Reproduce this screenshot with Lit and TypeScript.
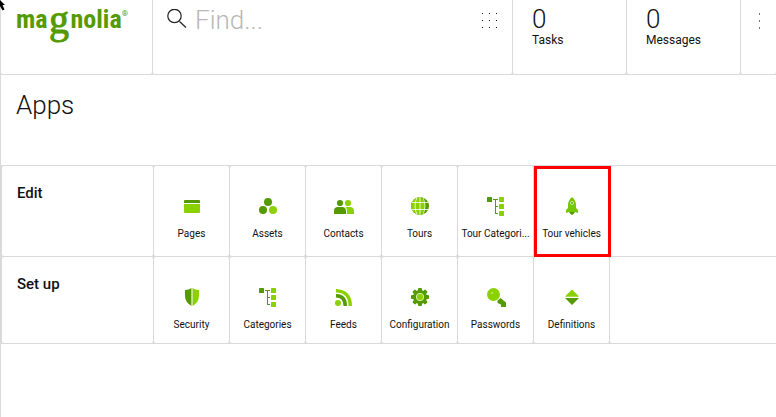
import { LitElement, html, css, svg } from "lit";
import { customElement, property } from "lit/decorators.js";
import { classMap } from "lit/directives/class-map.js";

const categoryTree = svg`
  <rect class="dark" x="1" y="1" width="5" height="5" rx=".5"/>
  <path class="dark" d="M7 3h5v1H7zM9 3h1v15H9zM9 10h3v1H9zM9 17h3v1H9z"/>
  <rect class="lime" x="13" y="1" width="5" height="5" rx=".5"/>
  <rect class="lime" x="13" y="8" width="5" height="5" rx=".5"/>
  <rect class="lime" x="13" y="15" width="5" height="5" rx=".5"/>`;

const icons: Record<string, unknown> = {
  pages: svg`
    <path class="dark" d="M2 5q0-1 1-1h14q1 0 1 1v2H2z"/>
    <path class="lime" d="M2 8h16v8q0 1-1 1H3q-1 0-1-1z"/>`,
  assets: svg`
    <circle class="dark" cx="10" cy="6" r="4"/>
    <circle class="dark" cx="5" cy="14" r="4"/>
    <circle class="lime" cx="15" cy="14" r="4"/>`,
  contacts: svg`
    <circle class="dark" cx="6" cy="7" r="3.100"/>
    <path class="dark" d="M0 18v-3q0-4 4-4h4q4 0 4 4v3z"/>
    <circle class="lime" cx="14" cy="7" r="3.100"/>
    <path class="lime" d="M11.500 11H16q4 0 4 4v3h-7v-3q0-2.500-1.500-4z"/>`,
  globe: svg`
    <circle class="dark" cx="10" cy="10" r="9"/>
    <path class="lime" d="M10 1a9 9 0 0 0 0 18q5-3 5-9t-5-9z"/>
    <path class="cut" d="M10 1v18M2 6.500h16M2 13.500h16M7 1.500q-4 8.500 0 17M13 1.500q4 8.500 0 17"/>`,
  tree: categoryTree,
  rocket: svg`
    <path class="leaf" d="M10 1q4 3.500 4 8v3l2 2v3l-3-1H7l-3 1v-3l2-2V9q0-4.500 4-8z"/>
    <path class="dark" d="M7 16h6l-1.500 2L10 19l-1.500-1z"/>
    <circle class="ring" cx="10" cy="7" r="1.500"/>`,
  shield: svg`
    <path class="dark" d="M9.500 1Q7 3 3 3v6q0 6 6.500 10z"/>
    <path class="lime" d="M10.500 1Q13 3 17 3v6q0 6-6.500 10z"/>
    <path class="pale" d="M9.500 1h1v18h-1z"/>`,
  feed: svg`
    <circle class="lime" cx="4" cy="16" r="3"/>
    <path class="dark" d="M2 7q11 0 11 12H9.500Q9.500 10.500 2 10.500z"/>
    <path class="lime" d="M2 2q16 1 16 17h-3.500Q14.500 5.500 2 5.500z"/>`,
  gear: svg`
    <circle class="dark" cx="10" cy="10" r="7"/>
    ${[0, 45, 90, 135].map((a) => svg`
      <rect class="dark" x="8" y="1" width="4" height="18" rx="1" transform="rotate(${a} 10 10)"/>`)}
    <circle class="lime hub" cx="10" cy="10" r="3.700"/>`,
  key: svg`
    <circle class="lime" cx="7.500" cy="7.500" r="6.500"/>
    <circle class="pale" cx="6" cy="6" r="1"/>
    <path class="dark" d="M14.500 11l5.500 4.500V20h-5v-2.500l-3.500-1.500V13.500z"/>`,
  diamond: svg`
    <path class="lime" d="M10 2.500l6.500 6.500v.800h-13V9z"/>
    <path class="dark" d="M3.500 11h13v.500L10 18l-6.500-6.500z"/>`,
};

interface App { label: string; icon: string; marked?: boolean; }
interface Group { name: string; apps: App[]; }

const groups: Group[] = [
  {
    name: "Edit",
    apps: [
      { label: "Pages", icon: "pages" },
      { label: "Assets", icon: "assets" },
      { label: "Contacts", icon: "contacts" },
      { label: "Tours", icon: "globe" },
      { label: "Tour Categori...", icon: "tree" },
      { label: "Tour vehicles", icon: "rocket", marked: true },
    ],
  },
  {
    name: "Set up",
    apps: [
      { label: "Security", icon: "shield" },
      { label: "Categories", icon: "tree" },
      { label: "Feeds", icon: "feed" },
      { label: "Configuration", icon: "gear" },
      { label: "Passwords", icon: "key" },
      { label: "Definitions", icon: "diamond" },
    ],
  },
];

@customElement("app-tile")
class AppTile extends LitElement {
  @property() label = "";
  @property() icon = "";
  @property({ type: Boolean }) marked = false;

  static styles = css`
    :host { display: block; min-width: 0; }
    button {
      position: relative;
      display: flex;
      flex-direction: column;
      align-items: center;
      justify-content: flex-start;
      gap: 10px;
      width: 100%;
      height: 100%;
      padding: 30px 2px 8px;
      border: 0;
      border-radius: 2px;
      background: #fff;
      color: #111;
      font: 10px/16px Roboto, sans-serif;
      cursor: pointer;
    }
    .marked { z-index: 1; }
    .marked::after {
      content: "";
      position: absolute;
      inset: 0 -2px -1px 0;
      border: 3px solid #f00;
    }
    svg { flex: none; width: 21px; height: 20px; overflow: visible; }
    .label { white-space: nowrap; }
    .dark { fill: #549a00; }
    .lime { fill: #8bd100; }
    .leaf { fill: #75c800; }
    .pale { fill: #c4e48c; }
    .cut { fill: none; stroke: #fff; stroke-width: 1; opacity: .8; }
    .ring { fill: #549a00; stroke: #d8f0b0; stroke-width: 1; }
    .hub { stroke: #d8f0b0; stroke-width: 1; }
  `;

  render() {
    return html`<button class=${classMap({ marked: this.marked })}>
      <svg viewBox="-1 0 21 20" aria-hidden="true">${icons[this.icon]}</svg>
      <span class="label">${this.label}</span>
    </button>`;
  }
}

@customElement("app-root")
class AppRoot extends LitElement {
  static styles = css`
    * { box-sizing: border-box; }
    :host {
      display: block;
      min-height: 100vh;
      border-left: 1px solid #dadada;
      box-sizing: border-box;
      background: #fff;
      color: #111;
      font-family: Roboto, sans-serif;
    }
    header {
      display: grid;
      grid-template-columns: 151px minmax(0, 1fr) 113px 113px 35px;
      gap: 1px;
      padding-bottom: 1px;
      background: #dadada;
    }
    .cell { height: 74px; border-radius: 0 0 2px 2px; background: #fff; }
    .logo {
      display: flex;
      align-items: flex-start;
      padding: 4px 0 0 15px;
      color: #549a00;
      font: bold 26px/30px "Liberation Sans Narrow", "Roboto Condensed", sans-serif;
      text-decoration: none;
    }
    .logo-g {
      width: 23px;
      text-align: center;
      font: 40px/32px "Liberation Serif", serif;
      -webkit-text-stroke: 1px #549a00;
    }
    .logo sup { font: 8px/20px Roboto, sans-serif; }
    .search {
      display: flex;
      align-items: flex-start;
      padding: 4px 13px 0 14px;
    }
    .search label { height: 32px; padding-top: 5px; }
    .search label svg, .icon-button svg { display: block; width: 20px; height: 20px; }
    .line { fill: none; stroke: #222; stroke-width: 1.200; }
    input {
      flex: 1;
      min-width: 0;
      height: 32px;
      padding: 0 8px;
      border: 0;
      outline: 0;
      background: none;
      font: 300 26px/32px Roboto, sans-serif;
    }
    input::placeholder { color: #b8b8b8; opacity: 1; }
    .icon-button {
      padding: 6px 0;
      border: 0;
      background: none;
      color: #333;
    }
    .stat {
      display: flex;
      flex-direction: column;
      align-items: flex-start;
      padding: 5px 0 0 19px;
      border: 0;
      color: #111;
      font: 12px/14px Roboto, sans-serif;
      text-align: left;
    }
    .count { font-size: 26px; font-weight: 300; line-height: 28px; }
    .more { display: flex; justify-content: center; align-items: flex-start; padding-top: 4px; }
    h1 {
      height: 90px;
      margin: 0;
      padding: 14px 15px;
      font-size: 26px;
      font-weight: 300;
      line-height: 32px;
    }
    .group {
      display: grid;
      grid-template-columns: 151px repeat(6, 75px) minmax(0, 1fr);
      gap: 1px;
      padding: 1px 0 0 1px;
      background: #dadada;
    }
    .edit { height: 91px; }
    .setup { height: 88px; padding-bottom: 1px; }
    h2 {
      margin: 0;
      padding: 18px 15px;
      border-radius: 2px;
      background: #fff;
      font-size: 15px;
      font-weight: 500;
      line-height: 18px;
    }
    .rest { background: #fff; border-radius: 2px 0 0 2px; }
    .pointer { position: absolute; top: 0; left: 0; width: 8px; height: 12px; }
  `;

  render() {
    const dots = [3, 10, 17];
    return html`
      <header>
        <a class="cell logo" href="#" aria-label="magnolia"
          ><span>ma</span><span class="logo-g">g</span><span>nolia</span><sup>®</sup></a>
        <div class="cell search">
          <label for="find" aria-label="Find">
            <svg viewBox="0 0 20 20">
              <circle class="line" cx="7.500" cy="7" r="6.700"/>
              <path class="line" d="M12.500 12.500l6.500 6"/>
            </svg>
          </label>
          <input id="find" type="text" placeholder="Find..." />
          <button class="icon-button" aria-label="App launcher">
            <svg viewBox="0 0 20 20">
              ${dots.map((y) => dots.map((x) => svg`<rect x=${x} y=${y} width="1" height="1" fill="#111"/>`))}
            </svg>
          </button>
        </div>
        <button class="cell stat"><span class="count">0</span><span>Tasks</span></button>
        <button class="cell stat"><span class="count">0</span><span>Messages</span></button>
        <div class="cell more">
          <button class="icon-button" aria-label="More">
            <svg viewBox="0 0 20 20">
              ${dots.map((y) => svg`<rect x="10" y=${y} width="1" height="2" fill="#777"/>`)}
            </svg>
          </button>
        </div>
      </header>
      <main>
        <h1>Apps</h1>
        ${groups.map((g, i) => html`
          <section class="group ${i === 0 ? "edit" : "setup"}">
            <h2>${g.name}</h2>
            ${g.apps.map((a) => html`
              <app-tile .label=${a.label} .icon=${a.icon} .marked=${!!a.marked}></app-tile>`)}
            <div class="rest"></div>
          </section>`)}
      </main>
      <svg class="pointer" viewBox="0 0 8 12" aria-hidden="true">
        <path d="M0 0l5 5H2.500L4.500 9.500 2.500 10.500 0 6z"/>
      </svg>
    `;
  }
}
